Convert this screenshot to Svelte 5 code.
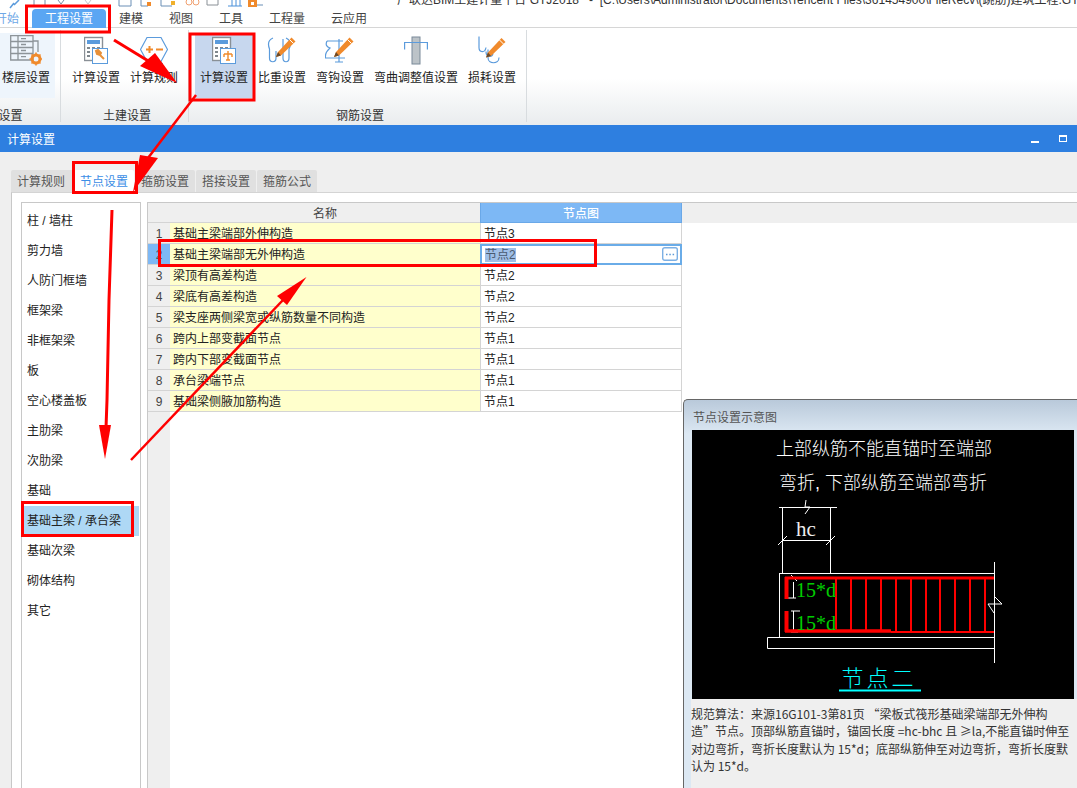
<script>
  const listItems = ['柱 / 墙柱', '剪力墙', '人防门框墙', '框架梁', '非框架梁', '板', '空心楼盖板', '主肋梁', '次肋梁', '基础', '基础主梁 / 承台梁', '基础次梁', '砌体结构', '其它'];
  const rows = [
    ['基础主梁端部外伸构造', '节点3'],
    ['基础主梁端部无外伸构造', '节点2'],
    ['梁顶有高差构造', '节点2'],
    ['梁底有高差构造', '节点2'],
    ['梁支座两侧梁宽或纵筋数量不同构造', '节点2'],
    ['跨内上部变截面节点', '节点1'],
    ['跨内下部变截面节点', '节点1'],
    ['承台梁端节点', '节点1'],
    ['基础梁侧腋加筋构造', '节点1']
  ];
  const tabs = ['计算规则', '节点设置', '箍筋设置', '搭接设置', '箍筋公式'];
  const menu = ['建模', '视图', '工具', '工程量', '云应用'];
  const descLines = [
    '规范算法：来源16G101-3第81页 “梁板式筏形基础梁端部无外伸构',
    '造”节点。顶部纵筋直锚时，锚固长度 =hc-bhc 且 ≥la,不能直锚时伸至',
    '对边弯折，弯折长度默认为 15*d；底部纵筋伸至对边弯折，弯折长度默',
    '认为 15*d。'
  ];
  const stirrups = [836, 851, 866, 881, 896, 911, 926, 940, 955, 970, 985];
</script>

{#snippet pencil(x, y)}
  <g transform="translate({x} {y})">
    <path d="M0 20 L2 15 L15.5 0.5 L19.5 4.5 L5 18.5 Z" fill="#f08a2c" />
    <path d="M13.5 2.5 L17.5 6.5" stroke="#fff" stroke-width="1" />
    <path d="M0 20 L2 15 L5 18.5 Z" fill="#6b4a2a" />
  </g>
{/snippet}

{#snippet calc()}
  <rect x="0.5" y="0.5" width="18" height="23" fill="#fff" stroke="#8a9096" stroke-width="1.4" />
  <rect x="3" y="3" width="13" height="4" fill="#5b9bdc" />
  <path d="M3 10h3v2h-3zM8 10h3v2h-3zM13 10h3v2h-3zM3 14h3v2h-3zM3 18h3v2h-3z" fill="#7f878d" />
  <rect x="8.5" y="11.5" width="15" height="15" fill="#fff" stroke="#5b9bdc" />
{/snippet}

<div class="page">
  <div class="strip">
    <svg class="quick" width="270" height="9" viewBox="0 0 270 9">
      <path d="M10 8 L14 3 M19 0 L14 5" stroke="#5b9bdc" stroke-width="1.5" fill="none" />
      <path d="M34 0 V6 H45 V0" stroke="#7a8fa6" fill="none" />
      <path d="M58 0 L61 4 L64 0" stroke="#7a8fa6" fill="none" />
      <path d="M85 0 L88 4 L91 0" stroke="#c4c8cc" fill="none" />
      <path d="M119 0 V6 H131 V0" stroke="#6a8fb6" fill="none" />
      <path d="M141 0 V6 H148" stroke="#6a8fb6" fill="none" />
      <rect x="147" y="2" width="4" height="4" fill="#f08a2c" />
      <path d="M161 0 V6 H172" stroke="#6a8fb6" fill="none" />
      <rect x="171" y="1" width="4" height="4" fill="#f0b02c" />
      <circle cx="189" cy="2" r="3" fill="none" stroke="#f0a070" />
      <circle cx="196" cy="2" r="3" fill="none" stroke="#f0a070" />
      <path d="M207 0 V5 H218 V0" stroke="#8a9096" fill="none" />
      <path d="M228 6 H242 M232 0 V6 M236 0 V6 M240 0 V6" stroke="#4a90d9" fill="none" />
      <rect x="248" y="0" width="9" height="7" fill="#f08a2c" />
      <rect x="251" y="2" width="3" height="3" fill="#fff" />
      <path d="M257 5 H263" stroke="#6a8fb6" fill="none" />
    </svg>
    <span class="app-title">广联达BIM土建计量平台 GTJ2018   -  [C:\Users\Administrator\Documents\Tencent Files\361454900\FileRecv\(跳筋)建筑工程.GTJ]</span>
  </div>

  <nav class="menu">
    <span class="menu-item start">开始</span>
    <span class="menu-item active">工程设置</span>
    {#each menu as m}
      <span class="menu-item">{m}</span>
    {/each}
  </nav>

  <div class="ribbon">
    <section class="group first">
      <div class="btns">
        <div class="btn soft">
          <svg class="icon" width="32" height="31" viewBox="0 0 32 31">
            <path d="M0.7 0.7H23V25H0.7Z M0.7 6.5H23 M0.7 12.5H23 M0.7 18.5H23 M8 0.7V25 M11 3.6H16 M11 9.5H16 M11 15.5H16 M11 21.7H16" fill="none" stroke="#8d9499" stroke-width="1.3" />
            <path d="M23 6H28V17" fill="none" stroke="#8d9499" stroke-width="1.3" />
            <circle cx="26" cy="24" r="4" fill="none" stroke="#f08a2c" stroke-width="3" />
            <path d="M26 17.5v2.5M26 28v2.5M19.5 24h2.5M30 24h2M21.5 19.5l2 2M28.5 26.5l2 2M30.5 19.5l-2 2M21.5 28.5l2-2" stroke="#f08a2c" stroke-width="1.6" />
          </svg>
          <span>楼层设置</span>
        </div>
      </div>
      <div class="group-label">楼层设置</div>
    </section>

    <section class="group">
      <div class="btns">
        <div class="btn">
          <svg class="icon" width="24" height="27" viewBox="0 0 24 27">
            {@render calc()}
            <path d="M20 22 L14 16 M12 14 l2 -1 l3 3 l-1 2 l-3 -1 Z" stroke="#e8913a" stroke-width="2" fill="#e8913a" />
          </svg>
          <span>计算设置</span>
        </div>
        <div class="btn">
          <svg class="icon" width="28" height="28" viewBox="0 0 28 28">
            <path d="M7 1H21L27.5 13L21 25H7L0.5 13Z" fill="#fff" stroke="#5b9bdc" stroke-width="1.2" />
            <path d="M6 13H13M9.5 9.5V16.5M16 13H23" stroke="#f08a2c" stroke-width="2" />
            <path d="M5 27H23" stroke="#5b9bdc" stroke-width="1.2" />
          </svg>
          <span>计算规则</span>
        </div>
      </div>
      <div class="group-label">土建设置</div>
    </section>

    <section class="group">
      <div class="btns">
        <div class="btn pressed">
          <svg class="icon" width="24" height="27" viewBox="0 0 24 27">
            {@render calc()}
            <path d="M16 14V23M12 17H20M12 17V20M20 17V20M14 23H18" stroke="#ef8a2a" stroke-width="1.4" fill="none" />
          </svg>
          <span>计算设置</span>
        </div>
        <div class="btn">
          <svg class="icon" width="30" height="27" viewBox="0 0 30 27">
            <path d="M6 1C1 3 1 8 2.5 12V21C2.5 26 9 26 9 21V14M19 1C24 3 24 8 22 12V21C22 26 16 26 16 21V2" fill="none" stroke="#5b9bdc" stroke-width="1.2" />
            {@render pencil(9, 0)}
          </svg>
          <span>比重设置</span>
        </div>
        <div class="btn">
          <svg class="icon" width="30" height="27" viewBox="0 0 30 27">
            <path d="M2 4H18M2 4C0 8 2 10 5 11C2 14 0 16 0.5 21H20M14 2V25M10 25H18" fill="none" stroke="#5b9bdc" stroke-width="1.2" />
            {@render pencil(9, 0)}
          </svg>
          <span>弯钩设置</span>
        </div>
        <div class="btn">
          <svg class="icon" width="24" height="28" viewBox="0 0 24 28">
            <rect x="8" y="0.5" width="8" height="27" fill="#bcc3c8" stroke="#7a8a99" />
            <path d="M0.6 13V6H23.4V13" fill="none" stroke="#5b9bdc" stroke-width="1.2" />
          </svg>
          <span>弯曲调整值设置</span>
        </div>
        <div class="btn">
          <svg class="icon" width="29" height="28" viewBox="0 0 29 28">
            <path d="M1 0V11C1 16 7 17 8 11M10 13V21C10 28 21 28 21 21" fill="none" stroke="#5b9bdc" stroke-width="1.2" />
            <path d="M8 15C8 21 14 21 15 17" fill="none" stroke="#5b9bdc" stroke-width="1.2" />
            {@render pencil(8, 1)}
          </svg>
          <span>损耗设置</span>
        </div>
      </div>
      <div class="group-label">钢筋设置</div>
    </section>
  </div>

  <header class="titlebar">
    <span>计算设置</span>
    <div class="win-btns">
      <i class="win-min"></i>
      <i class="win-max"></i>
    </div>
  </header>

  <main class="content">
    <div class="tabs">
      {#each tabs as t, i}
        <span class="tab" class:on={i === 1}>{t}</span>
      {/each}
    </div>
    <div class="panel">
      <ul class="list">
        {#each listItems as item, i}
          <li class:sel={i === 10}>{item}</li>
        {/each}
      </ul>
      <div class="sheet">
        <div class="row head">
          <div class="num"></div>
          <div class="name">名称</div>
          <div class="node">节点图</div>
        </div>
        {#each rows as r, i}
          <div class="row" class:current={i === 1}>
            <div class="num">{i + 1}</div>
            <div class="name">{r[0]}</div>
            <div class="node">
              {#if i === 1}
                <span class="picked">{r[1]}</span>
                <span class="more">
                  <svg width="16" height="14" viewBox="0 0 16 14">
                    <rect x="0.7" y="0.7" width="14.6" height="12.6" rx="2" fill="#fff" stroke="#7db0e4" stroke-width="1.4" />
                    <path d="M4 7.5h1.5M7.3 7.5h1.5M10.6 7.5h1.5" stroke="#5d9ad8" stroke-width="1.5" />
                  </svg>
                </span>
              {:else}
                {r[1]}
              {/if}
            </div>
          </div>
        {/each}
      </div>
    </div>
  </main>

  <aside class="float">
    <div class="float-title">节点设置示意图</div>
    <svg class="diagram" width="382" height="269" viewBox="692 430 382 269">
      <rect x="692" y="430" width="382" height="269" fill="#000" />
      <text class="cap" x="884" y="455">上部纵筋不能直锚时至端部</text>
      <text class="cap" x="883" y="489">弯折, 下部纵筋至端部弯折</text>

      <g fill="none" stroke="#fff" stroke-width="1">
        <path d="M779 507.5H837M782.5 507V573M830.5 507V573M782 540.5H830" />
        <path d="M778 545L787 536M826 545L835 536M806 500L805 507L810 507L805 514" />
        <path d="M779.5 573.5H994.5M779.5 573V637M767.5 637.5H994.5V648.5H767.5ZM994.5 562V663" />
        <path d="M995 597L1002 604H988L994 613" />
        <path d="M791 575L797 581M793.5 582V598M787 598H796M791 611H800M793.5 611V631M791 632H798" />
      </g>

      <g fill="none" stroke="#f00">
        <path d="M785 578H994" stroke-width="3" />
        <path d="M786.5 577V599M786.5 611V632" stroke-width="4" />
        <path d="M785 631H891" stroke-width="3.5" />
        <path d="M891 632H994" stroke-width="2" />
        {#each stirrups as sx}
          <path d="M{sx} 578V632" stroke-width="2" />
        {/each}
      </g>

      <text class="green" x="796" y="597">15*d</text>
      <text class="green" x="796" y="630">15*d</text>
      <text class="hc" x="806" y="536">hc</text>
      <text class="node-name" x="879" y="686">节点二</text>
      <path d="M839 690.5H921" stroke="#0ff" stroke-width="2" />
    </svg>
    <div class="desc">
      {#each descLines as line}
        <div>{line}</div>
      {/each}
    </div>
  </aside>

  <svg class="marks" width="1077" height="788" viewBox="0 0 1077 788">
    <g fill="none" stroke="#f00" stroke-width="3">
      <rect x="26.5" y="6" width="83" height="26" />
      <rect x="190" y="34" width="64" height="66" />
      <rect x="73.5" y="162.5" width="63" height="30" />
      <rect x="159.5" y="240.5" width="436" height="25" />
      <rect x="22.5" y="502.5" width="110" height="33" />
    </g>
    <g fill="none" stroke="#f00">
      <path d="M114 40L150 62" stroke-width="3" />
      <path d="M196 95L148 158" stroke-width="2.5" />
      <path d="M112 210L109 300L107 400L106 428" stroke-width="3" />
      <path d="M131 460L283 300" stroke-width="2.5" />
    </g>
    <g fill="#f00">
      <polygon points="177,83 140,66 155,53" />
      <polygon points="133,192 140,155 158,158" />
      <polygon points="105,459 99,425 111,425" />
      <polygon points="306.5,277 277,296 287,305" />
    </g>
  </svg>
</div>

<style>
  :global(body) {
    margin: 0;
    background: #fff;
  }

  .page {
    position: relative;
    width: 1077px;
    height: 788px;
    overflow: hidden;
    display: flex;
    flex-direction: column;
    font-family: "Liberation Sans", "Noto Sans CJK SC", sans-serif;
    font-size: 12px;
    color: #222;
    background: #fff;
  }

  /* window title, cut off by the top of the screenshot */
  .strip {
    height: 9px;
    flex: none;
    display: flex;
    overflow: hidden;
  }

  .quick {
    flex: none;
  }

  .app-title {
    margin: -8px 0 0 127px;
    line-height: 16px;
    white-space: pre;
    color: #333;
  }

  .menu {
    height: 18px;
    flex: none;
    display: flex;
    margin-left: -18px;
    border-bottom: 1px solid #d6d6d6;
  }

  .menu-item {
    padding: 0 13px;
    line-height: 20px;
    color: #444;
  }

  .menu-item.start {
    color: #6fa8e6;
  }

  .menu-item.active {
    height: 19px;
    color: #fff;
    background: #5aa6f3;
    border-radius: 4px 4px 0 0;
  }

  .ribbon {
    height: 97px;
    flex: none;
    display: flex;
    background: linear-gradient(#fff 0, #fff 52%, #e9ecee 100%);
  }

  .group {
    position: relative;
    display: flex;
    flex-direction: column;
    padding: 5px 6px 0 5px;
    margin-right: 1px;
    height: 92px;
    box-sizing: border-box;
  }

  .group::after {
    content: "";
    position: absolute;
    right: 0;
    top: 2px;
    bottom: -2px;
    width: 1px;
    background: #d8dcdf;
  }

  .group.first {
    width: 124px;
    margin-left: -63px;
  }

  .btns {
    display: flex;
    justify-content: flex-end;
    height: 65px;
  }

  .btn {
    display: flex;
    flex-direction: column;
    align-items: center;
    padding: 2px 5px 0;
    height: 65px;
    box-sizing: border-box;
    color: #222;
    white-space: nowrap;
  }

  .btn .icon {
    height: 31px;
    flex: none;
  }

  .btn span {
    margin-top: 2px;
    line-height: 20px;
  }

  .btn.soft {
    background: #eef5fc;
  }

  .btn.pressed {
    background: #c7d7ee;
  }

  .group-label {
    margin-top: 8px;
    padding-left: 4px;
    text-align: center;
    line-height: 20px;
    color: #333;
  }

  .first .group-label {
    padding-left: 0;
  }

  .titlebar {
    height: 27px;
    flex: none;
    display: flex;
    align-items: center;
    justify-content: space-between;
    padding: 0 10px 0 7px;
    background: #2e7fe0;
    color: #fff;
  }

  .win-btns {
    display: flex;
    align-items: center;
    gap: 20px;
  }

  .win-min {
    width: 8px;
    height: 2px;
    margin-top: 7px;
    background: #fff;
  }

  .win-max {
    width: 6px;
    height: 4px;
    border: 1px solid #fff;
    border-top-width: 2px;
  }

  .content {
    flex: 1;
    min-height: 0;
    display: flex;
    flex-direction: column;
    padding: 18px 0 0 11px;
    background: #efefef;
  }

  .tabs {
    display: flex;
    gap: 1px;
    flex: none;
  }

  .tab {
    width: 54px;
    height: 22px;
    padding-left: 6px;
    line-height: 24px;
    background: #e0e0e0;
    color: #555;
    border-radius: 2px 2px 0 0;
  }

  .tab:first-child {
    width: 56px;
  }

  .tab.on {
    background: #fff;
    color: #3c8ee6;
  }

  .panel {
    flex: 1;
    min-height: 0;
    display: flex;
    gap: 6px;
    padding: 9px 0 0 9px;
    background: #fff;
    border-top: 1px solid #d4d4d4;
    border-left: 1px solid #c8c8c8;
  }

  .list {
    width: 118px;
    flex: none;
    margin: 0;
    padding: 3px 0 0;
    list-style: none;
    border: 1px solid #c8c8c8;
    border-bottom: 0;
  }

  .list li {
    height: 30px;
    line-height: 30px;
    padding-left: 3px;
    margin: 0 1px 0 2px;
    white-space: nowrap;
    color: #222;
  }

  .list li.sel {
    background: #aed8f5;
  }

  .sheet {
    flex: 1;
    border-top: 1px solid #c8c8c8;
    border-left: 1px solid #c8c8c8;
    background: linear-gradient(to right, #efefef 22px, #fff 22px);
  }

  .row {
    display: grid;
    grid-template-columns: 22px 310px 202px;
    grid-template-rows: 21px;
    line-height: 23px;
  }

  .row > div {
    box-sizing: border-box;
    border-bottom: 1px solid #d4d4d4;
    white-space: nowrap;
  }

  .row.head {
    grid-template-rows: 20px;
    line-height: 22px;
    background: #efefef;
  }

  .num {
    text-align: center;
    color: #444;
    background: #efefef;
  }

  .name {
    padding-left: 3px;
    background: #ffffcc;
    color: #222;
  }

  .node {
    position: relative;
    padding-left: 3px;
    background: #fff;
    border-right: 1px solid #d4d4d4;
    border-left: 1px solid #d4d4d4;
  }

  .head .name {
    padding: 0;
    text-align: center;
    background: #efefef;
    color: #444;
  }

  .head .node {
    padding: 0;
    text-align: center;
    font-weight: 500;
    color: #fff;
    background: #7db8f5;
    border-color: #6aa8e8;
  }

  .current .num {
    background: #7db8f5;
    color: #555;
  }

  .current .node {
    padding-left: 3px;
    line-height: 19px;
    border: 2px solid #6aace8;
  }

  .picked {
    background: #9fbfe8;
    color: #4a5a70;
  }

  .more {
    position: absolute;
    right: 2px;
    top: 1px;
    height: 14px;
    display: flex;
  }

  /* floating preview window */
  .float {
    position: absolute;
    left: 683px;
    top: 399px;
    right: 0;
    bottom: 0;
    display: flex;
    flex-direction: column;
    box-sizing: border-box;
    padding: 0 3px 0 7px;
    border: 1px solid #666;
    border-width: 1px 0 0 1px;
    border-radius: 5px 0 0 0;
    background: linear-gradient(#b9c9da 0, #dce8f3 34px);
  }

  .float-title {
    height: 30px;
    line-height: 36px;
    padding-left: 2px;
    color: #555;
    flex: none;
  }

  .diagram {
    display: block;
    margin-left: 1px;
    flex: none;
  }

  .cap {
    font-size: 18px;
    font-weight: 300;
    fill: #fff;
    text-anchor: middle;
  }

  .green {
    font-family: "Liberation Serif", serif;
    font-size: 20px;
    fill: #0c0;
  }

  .hc {
    font-family: "Liberation Serif", serif;
    font-size: 21px;
    fill: #eee;
    text-anchor: middle;
  }

  .node-name {
    font-size: 22px;
    font-weight: 300;
    letter-spacing: 3px;
    fill: #0ff;
    text-anchor: middle;
  }

  .desc {
    flex: 1;
    margin-right: -3px;
    padding-top: 6px;
    font-family: "Noto Sans CJK SC", sans-serif;
    line-height: 17.3px;
    white-space: nowrap;
    background: #efefef;
    color: #333;
  }

  .marks {
    position: absolute;
    left: 0;
    top: 0;
    pointer-events: none;
  }
</style>
